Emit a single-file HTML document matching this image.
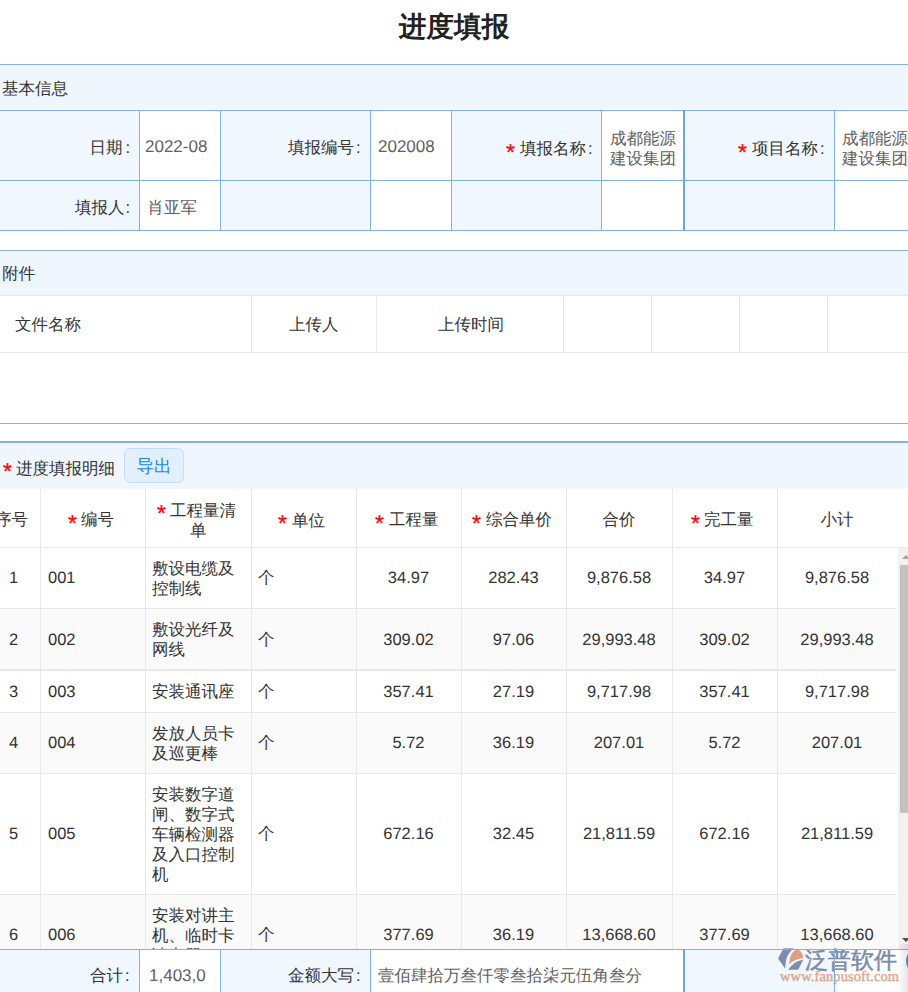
<!DOCTYPE html>
<html><head><meta charset="utf-8">
<style>
*{box-sizing:border-box;margin:0;padding:0}
html,body{width:908px;height:992px;overflow:hidden;background:#fff}
body{position:relative;font-family:"Liberation Sans",sans-serif;font-size:16.5px;color:#333;text-rendering:geometricPrecision}
.a{position:absolute}
.t{position:absolute;white-space:nowrap;line-height:20px}
.b{background:#82b3e0}
.bd{background:#6fa6da}
.g{background:#e8e8e8}
.lab{background:#f0f7fe}
.hdr{background:#f0f6fd}
.r{color:#ff0000}
.v{color:#606060}
.star{font-size:23px;line-height:20px;-webkit-text-stroke:0.3px #ff0000}
.n{font-size:16.5px}
.c{margin-left:2px}
.c3{margin-left:3px}
.c1{margin-left:1px}
</style></head><body>

<div class="t " style="left:0px;width:908px;text-align:center;top:10px;line-height:34px;font-size:27.7px;font-weight:bold;color:#222">进度填报</div>
<div class="a hdr" style="left:0px;top:64px;width:908px;height:45px;"></div>
<div class="a b" style="left:0px;top:64px;width:908px;height:1px;"></div>
<div class="t " style="left:2px;top:79px;">基本信息</div>
<div class="a lab" style="left:0px;top:111px;width:139px;height:119px;"></div>
<div class="a lab" style="left:220px;top:111px;width:150px;height:119px;"></div>
<div class="a lab" style="left:451px;top:111px;width:150px;height:119px;"></div>
<div class="a lab" style="left:684px;top:111px;width:150px;height:119px;"></div>
<div class="a b" style="left:0px;top:110px;width:908px;height:1px;"></div>
<div class="a b" style="left:0px;top:180px;width:908px;height:1px;"></div>
<div class="a b" style="left:0px;top:230px;width:908px;height:1px;"></div>
<div class="a b" style="left:139px;top:110px;width:1px;height:121px;"></div>
<div class="a b" style="left:220px;top:110px;width:1px;height:121px;"></div>
<div class="a b" style="left:370px;top:110px;width:1px;height:121px;"></div>
<div class="a b" style="left:451px;top:110px;width:1px;height:121px;"></div>
<div class="a b" style="left:601px;top:110px;width:1px;height:121px;"></div>
<div class="a b" style="left:834px;top:110px;width:1px;height:121px;"></div>
<div class="a bd" style="left:683px;top:110px;width:2px;height:121px;"></div>
<div class="t " style="left:89.5px;top:138px;">日期<span class="c3">:</span></div>
<div class="t v" style="left:145px;top:137px;font-size:17px;">2022-08</div>
<div class="t " style="left:288px;top:138px;">填报编号<span class="c">:</span></div>
<div class="t v" style="left:378px;top:137px;font-size:17px;">202008</div>
<div class="t r star" style="left:506px;top:141.8px">*</div>
<div class="t " style="left:520px;top:139px;">填报名称<span class="c">:</span></div>
<div class="t v" style="left:610px;top:128.5px;">成都能源<br>建设集团</div>
<div class="t r star" style="left:738px;top:142.3px">*</div>
<div class="t " style="left:752px;top:139px;">项目名称<span class="c">:</span></div>
<div class="t v" style="left:842px;top:128.5px;">成都能源<br>建设集团</div>
<div class="t " style="left:75px;top:198px;">填报人<span class="c1">:</span></div>
<div class="t v" style="left:147.5px;top:197.5px;">肖亚军</div>
<div class="a hdr" style="left:0px;top:250px;width:908px;height:46px;"></div>
<div class="a b" style="left:0px;top:250px;width:908px;height:1px;"></div>
<div class="a g" style="left:0px;top:295px;width:908px;height:1px;"></div>
<div class="t " style="left:2.3px;top:264px;">附件</div>
<div class="a " style="left:0px;top:352px;width:908px;height:1px;background:#dfe7ef"></div>
<div class="a g" style="left:251px;top:296px;width:1px;height:56px;"></div>
<div class="a g" style="left:376px;top:296px;width:1px;height:56px;"></div>
<div class="a g" style="left:563px;top:296px;width:1px;height:56px;"></div>
<div class="a g" style="left:651px;top:296px;width:1px;height:56px;"></div>
<div class="a g" style="left:739px;top:296px;width:1px;height:56px;"></div>
<div class="a g" style="left:827px;top:296px;width:1px;height:56px;"></div>
<div class="t " style="left:15px;top:315px;">文件名称</div>
<div class="t " style="left:289px;top:315px;">上传人</div>
<div class="t " style="left:438px;top:315px;">上传时间</div>
<div class="a b" style="left:0px;top:423px;width:908px;height:1px;"></div>
<div class="a hdr" style="left:0px;top:442px;width:908px;height:47px;"></div>
<div class="a b" style="left:0px;top:441px;width:908px;height:2px;"></div>
<div class="t r star" style="left:3px;top:460.8px">*</div>
<div class="t " style="left:16px;top:458.5px;">进度填报明细</div>
<div class="a" style="left:124px;top:448px;width:60px;height:35px;border:1px solid #c6def4;background:#e2effc;border-radius:6px;color:#1a87f2;text-align:center;line-height:34px;font-size:17.5px">导出</div>
<div class="a " style="left:0px;top:609px;width:897px;height:61px;background:#fafafa"></div>
<div class="a " style="left:0px;top:713px;width:897px;height:60px;background:#fafafa"></div>
<div class="a " style="left:0px;top:895px;width:897px;height:80px;background:#fafafa"></div>
<div class="a g" style="left:0px;top:547px;width:908px;height:1px;"></div>
<div class="a g" style="left:0px;top:608px;width:897px;height:1px;"></div>
<div class="a g" style="left:0px;top:670px;width:897px;height:1px;"></div>
<div class="a g" style="left:0px;top:712px;width:897px;height:1px;"></div>
<div class="a g" style="left:0px;top:773px;width:897px;height:1px;"></div>
<div class="a g" style="left:0px;top:894px;width:897px;height:1px;"></div>
<div class="a g" style="left:0px;top:669px;width:897px;height:1px;"></div>
<div class="a g" style="left:40px;top:489px;width:1px;height:460px;"></div>
<div class="a g" style="left:145px;top:489px;width:1px;height:460px;"></div>
<div class="a g" style="left:251px;top:489px;width:1px;height:460px;"></div>
<div class="a g" style="left:356px;top:489px;width:1px;height:460px;"></div>
<div class="a g" style="left:461px;top:489px;width:1px;height:460px;"></div>
<div class="a g" style="left:566px;top:489px;width:1px;height:460px;"></div>
<div class="a g" style="left:672px;top:489px;width:1px;height:460px;"></div>
<div class="a g" style="left:777px;top:489px;width:1px;height:460px;"></div>
<div class="t " style="left:-17px;width:57px;text-align:center;top:510px;">序号</div>
<div class="t r star" style="left:68px;top:512.8px">*</div>
<div class="t " style="left:81px;top:510px;">编号</div>
<div class="t r star" style="left:157px;top:502.8px">*</div>
<div class="t " style="left:170px;top:500.5px;">工程量清</div>
<div class="t " style="left:190px;top:520.5px;">单</div>
<div class="t r star" style="left:278px;top:513.3px">*</div>
<div class="t " style="left:292px;top:510.5px;">单位</div>
<div class="t r star" style="left:375px;top:512.8px">*</div>
<div class="t " style="left:389px;top:510.3px;">工程量</div>
<div class="t r star" style="left:472px;top:512.8px">*</div>
<div class="t " style="left:486px;top:510.3px;">综合单价</div>
<div class="t " style="left:566px;width:106px;text-align:center;top:510.3px;">合价</div>
<div class="t r star" style="left:691px;top:512.8px">*</div>
<div class="t " style="left:704px;top:510.3px;">完工量</div>
<div class="t " style="left:777px;width:120px;text-align:center;top:510.3px;">小计</div>
<div class="t n" style="left:-13px;width:53px;text-align:center;top:568.0px;">1</div>
<div class="t n" style="left:48px;top:568.0px;">001</div>
<div class="t " style="left:152px;top:558.5px;">敷设电缆及<br>控制线</div>
<div class="t " style="left:258px;top:568.0px;">个</div>
<div class="t n" style="left:356px;width:105px;text-align:center;top:568.0px;">34.97</div>
<div class="t n" style="left:461px;width:105px;text-align:center;top:568.0px;">282.43</div>
<div class="t n" style="left:566px;width:106px;text-align:center;top:568.0px;">9,876.58</div>
<div class="t n" style="left:672px;width:105px;text-align:center;top:568.0px;">34.97</div>
<div class="t n" style="left:777px;width:120px;text-align:center;top:568.0px;">9,876.58</div>
<div class="t n" style="left:-13px;width:53px;text-align:center;top:629.5px;">2</div>
<div class="t n" style="left:48px;top:629.5px;">002</div>
<div class="t " style="left:152px;top:620.0px;">敷设光纤及<br>网线</div>
<div class="t " style="left:258px;top:629.5px;">个</div>
<div class="t n" style="left:356px;width:105px;text-align:center;top:629.5px;">309.02</div>
<div class="t n" style="left:461px;width:105px;text-align:center;top:629.5px;">97.06</div>
<div class="t n" style="left:566px;width:106px;text-align:center;top:629.5px;">29,993.48</div>
<div class="t n" style="left:672px;width:105px;text-align:center;top:629.5px;">309.02</div>
<div class="t n" style="left:777px;width:120px;text-align:center;top:629.5px;">29,993.48</div>
<div class="t n" style="left:-13px;width:53px;text-align:center;top:681.5px;">3</div>
<div class="t n" style="left:48px;top:681.5px;">003</div>
<div class="t " style="left:152px;top:682.0px;">安装通讯座</div>
<div class="t " style="left:258px;top:681.5px;">个</div>
<div class="t n" style="left:356px;width:105px;text-align:center;top:681.5px;">357.41</div>
<div class="t n" style="left:461px;width:105px;text-align:center;top:681.5px;">27.19</div>
<div class="t n" style="left:566px;width:106px;text-align:center;top:681.5px;">9,717.98</div>
<div class="t n" style="left:672px;width:105px;text-align:center;top:681.5px;">357.41</div>
<div class="t n" style="left:777px;width:120px;text-align:center;top:681.5px;">9,717.98</div>
<div class="t n" style="left:-13px;width:53px;text-align:center;top:733.0px;">4</div>
<div class="t n" style="left:48px;top:733.0px;">004</div>
<div class="t " style="left:152px;top:723.5px;">发放人员卡<br>及巡更棒</div>
<div class="t " style="left:258px;top:733.0px;">个</div>
<div class="t n" style="left:356px;width:105px;text-align:center;top:733.0px;">5.72</div>
<div class="t n" style="left:461px;width:105px;text-align:center;top:733.0px;">36.19</div>
<div class="t n" style="left:566px;width:106px;text-align:center;top:733.0px;">207.01</div>
<div class="t n" style="left:672px;width:105px;text-align:center;top:733.0px;">5.72</div>
<div class="t n" style="left:777px;width:120px;text-align:center;top:733.0px;">207.01</div>
<div class="t n" style="left:-13px;width:53px;text-align:center;top:824.0px;">5</div>
<div class="t n" style="left:48px;top:824.0px;">005</div>
<div class="t " style="left:152px;top:784.5px;">安装数字道<br>闸、数字式<br>车辆检测器<br>及入口控制<br>机</div>
<div class="t " style="left:258px;top:824.0px;">个</div>
<div class="t n" style="left:356px;width:105px;text-align:center;top:824.0px;">672.16</div>
<div class="t n" style="left:461px;width:105px;text-align:center;top:824.0px;">32.45</div>
<div class="t n" style="left:566px;width:106px;text-align:center;top:824.0px;">21,811.59</div>
<div class="t n" style="left:672px;width:105px;text-align:center;top:824.0px;">672.16</div>
<div class="t n" style="left:777px;width:120px;text-align:center;top:824.0px;">21,811.59</div>
<div class="t n" style="left:-13px;width:53px;text-align:center;top:925.0px;">6</div>
<div class="t n" style="left:48px;top:925.0px;">006</div>
<div class="t " style="left:152px;top:905.5px;">安装对讲主<br>机、临时卡<br>读卡器</div>
<div class="t " style="left:258px;top:925.0px;">个</div>
<div class="t n" style="left:356px;width:105px;text-align:center;top:925.0px;">377.69</div>
<div class="t n" style="left:461px;width:105px;text-align:center;top:925.0px;">36.19</div>
<div class="t n" style="left:566px;width:106px;text-align:center;top:925.0px;">13,668.60</div>
<div class="t n" style="left:672px;width:105px;text-align:center;top:925.0px;">377.69</div>
<div class="t n" style="left:777px;width:120px;text-align:center;top:925.0px;">13,668.60</div>
<div class="a " style="left:898px;top:548px;width:10px;height:401px;background:#f1f1f1"></div>
<div class="a " style="left:900px;top:565px;width:8px;height:248px;background:#c1c1c1"></div>
<div class="a" style="left:902px;top:555px;width:0;height:0;border-left:4px solid transparent;border-right:4px solid transparent;border-bottom:4px solid #a3a3a3"></div>
<div class="a" style="left:902px;top:938px;width:0;height:0;border-left:4px solid transparent;border-right:4px solid transparent;border-top:4px solid #505050"></div>
<div class="a " style="left:0px;top:949px;width:908px;height:43px;background:#fff"></div>
<div class="a lab" style="left:0px;top:950px;width:139px;height:42px;"></div>
<div class="a lab" style="left:220px;top:950px;width:150px;height:42px;"></div>
<div class="a lab" style="left:684px;top:950px;width:150px;height:42px;"></div>
<div class="a b" style="left:0px;top:949px;width:908px;height:1px;"></div>
<div class="a b" style="left:139px;top:949px;width:1px;height:43px;"></div>
<div class="a b" style="left:220px;top:949px;width:1px;height:43px;"></div>
<div class="a b" style="left:370px;top:949px;width:1px;height:43px;"></div>
<div class="a b" style="left:834px;top:949px;width:1px;height:43px;"></div>
<div class="a bd" style="left:683px;top:949px;width:2px;height:43px;"></div>
<div class="t " style="left:90px;top:966px;">合计<span class="c">:</span></div>
<div class="t v" style="left:149px;top:966px;font-size:17px;">1,403,0</div>
<div class="t " style="left:288px;top:966px;">金额大写<span class="c">:</span></div>
<div class="t v" style="left:378px;top:966px;">壹佰肆拾万叁仟零叁拾柒元伍角叁分</div>
<div class="a" style="left:898px;top:944px;width:10px;height:48px;background:linear-gradient(to right,rgba(0,0,0,0),rgba(0,0,0,0.10))"></div>
<div class="a" style="left:906px;top:948px;width:26px;height:26px;border-radius:50%;background:#1e90f5"></div>
<svg class="a" style="left:0;top:0" width="908" height="992" viewBox="0 0 908 992"><path d="M783.5,948.2 L793.5,948.2 Q786.5,955 786,961 L785,968.5 L778.1,958.6 Z" fill="#7d8cae"/><path d="M788.9,964.4 Q790,951 797.4,949.6 Q802.5,951 803.3,958.3 Q795,958.5 788.9,964.4 Z" fill="#dd9f83"/><path d="M788.1,969.8 L798.1,969.8 L803.3,959.8 Q795,960.5 788.1,969.8 Z" fill="#7d8cae"/></svg>
<div class="t" style="left:805px;top:946.5px;font-size:23px;line-height:26px;color:#7b8aab;-webkit-text-stroke:0.5px #7b8aab">泛普软件</div>
<div class="t" style="left:780px;top:969.5px;font-family:'Liberation Serif',serif;font-size:14.5px;line-height:14px;color:#dfa389;letter-spacing:0.1px;-webkit-text-stroke:0.35px #dfa389">www.fanpusoft.com</div>
<div class="a b" style="left:834px;top:949px;width:1px;height:43px;"></div>
<div class="a b" style="left:780px;top:949px;width:118px;height:1px;"></div>
</body></html>
